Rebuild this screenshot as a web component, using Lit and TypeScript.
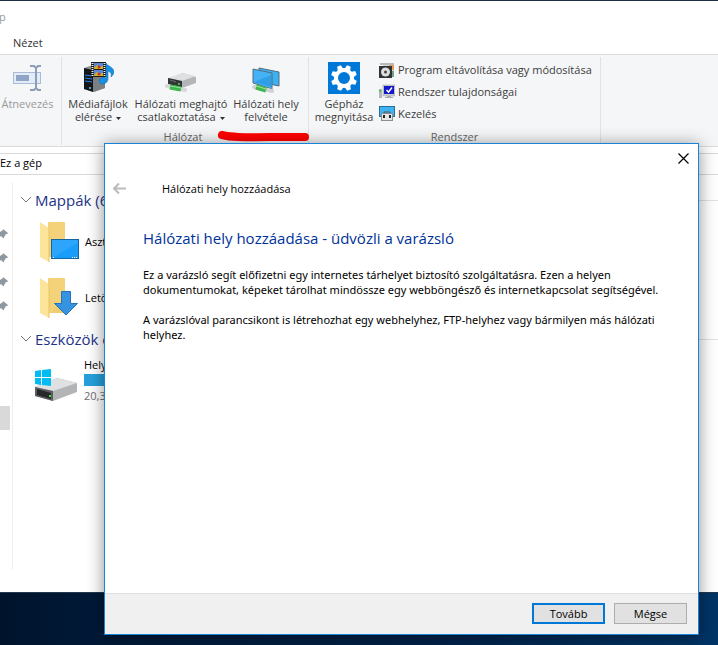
import { LitElement, html, css, svg } from "lit";
import { customElement } from "lit/decorators.js";

const renameIcon = svg`<svg class="i32" viewBox="0 0 32 32" aria-hidden="true">
  <rect x="1.500" y="10.500" width="27" height="11" fill="#e3ebf6" stroke="#a9bbd9"/>
  <rect x="4" y="13" width="13" height="6" fill="#8fa5c8"/>
  <path d="M18 4h4l2 2 2-2h3M18 28h4l2-2 2 2h3M24 6v20" fill="none" stroke="#8c9db8" stroke-width="2"/></svg>`;

const mediaIcon = svg`<svg class="i32" viewBox="0 0 32 32" aria-hidden="true">
  <path d="M2 6l9-3 12 3v20l-11 4-10-3z" fill="#8d9093"/>
  <path d="M2 6l9 2v22l-9-3z" fill="#15181b"/>
  <path d="M11 8l12-3v21l-12 4z" fill="#7d8083"/>
  <path d="M3 13l7 1M3 16l7 1M3 19l7 1" stroke="#2a84f0"/>
  <circle cx="8" cy="26" r="1" fill="#62cfff"/>
  <rect x="9" y="0" width="15" height="15" fill="#1b1b1b"/>
  <path d="M10.500 1v13M22.500 1v13" stroke="#eee" stroke-width="2" stroke-dasharray="1 1"/>
  <rect x="12" y="1" width="9" height="6" fill="#5c86d8"/><rect x="12" y="8" width="9" height="6" fill="#5c86d8"/>
  <path d="M12 6l3-3 3 2 3-1v3h-9zM12 13l3-3 3 2 3-1v3h-9z" fill="#d8b21c"/>
  <circle cx="17" cy="5" r="1.500" fill="#c8302c"/><circle cx="17" cy="12" r="1.500" fill="#c8302c"/>
  <path d="M24 1c1 3 8 4 8 9 0 2-2 4-3 5 1-4-1-5-3-6v8c0 3-3 5-6 5-3 0-4-4-1-6 2-1 3-1 5 0z" fill="#1a8fe3" stroke="#0d6ab5" stroke-width=".5"/></svg>`;

const driveIcon = svg`<svg class="i32" viewBox="0 0 32 32" aria-hidden="true">
  <path d="M3 17L18 11l13 4v6L17 26 3 22z" fill="#b3b5b8"/>
  <path d="M3 16L18 11l13 3-14 5z" fill="#dfe0e1"/>
  <path d="M3 16l14 3v7L3 22z" fill="#323537"/>
  <path d="M5 18l6 2" stroke="#6b6e70"/><circle cx="14" cy="22" r="1" fill="#49e04e"/>
  <path d="M2 24l18 4" stroke="#d6d8da" stroke-width="4" stroke-linecap="round"/>
  <path d="M5 25l11 2" stroke="#3fb54b" stroke-width="5"/><path d="M5 24l11 2" stroke="#8fe394"/></svg>`;

const placeIcon = svg`<svg class="i32" viewBox="0 0 32 32" aria-hidden="true">
  <path d="M9 6l20 4v14l-20-4z" fill="#3db0f2" stroke="#536c7d"/>
  <path d="M3 7l19 4v16l-19-6z" fill="#45b2f5" stroke="#536c7d"/>
  <path d="M4 20L21 13v12z" fill="#2f9fe8"/>
  <path d="M4 25l18 4" stroke="#d0d3d5" stroke-width="4" stroke-linecap="round"/>
  <path d="M6 25l10 3" stroke="#42b64c" stroke-width="5"/><path d="M6 24l10 3" stroke="#9be69d"/></svg>`;

const teeth = [0, 45, 90, 135, 180, 225, 270, 315];
const gearIcon = svg`<svg class="i32" viewBox="0 0 32 32" aria-hidden="true">
  <rect width="32" height="32" fill="#0078d7"/>
  <circle cx="16" cy="16" r="8" fill="none" stroke="#fff" stroke-width="4"/>
  ${teeth.map(a => svg`<path d="M13 7.500l1-4.500h4l1 4.500z" fill="#fff" transform="rotate(${a + 22} 16 16)"/>`)}</svg>`;

const programIcon = svg`<svg class="i16" viewBox="0 0 16 16" aria-hidden="true">
  <path d="M3 1h12v14h-4z" fill="#cfd6d2"/><path d="M1 1h14v2h-14z" fill="#b8bbbd"/>
  <path d="M10 3h5v6z" fill="#e79a5a"/><path d="M12 9h3v6h-3z" fill="#6fa486"/>
  <rect x="0" y="4" width="13" height="12" fill="#303234"/>
  <circle cx="6.500" cy="10" r="4.500" fill="#dcdedf"/><circle cx="6.500" cy="10" r="1.500" fill="#444"/></svg>`;

const systemIcon = svg`<svg class="i16" viewBox="0 0 16 16" aria-hidden="true">
  <rect x="0" y="5" width="3" height="9" fill="#b4b7ba"/><rect x="0" y="6" width="2" height="2" fill="#4fc444"/>
  <rect x="4" y="1" width="12" height="11" fill="#c9cccf" stroke="#9b9ea1" stroke-width=".5"/>
  <rect x="5" y="2" width="10" height="8" fill="#1418c8"/>
  <path d="M7.500 6l2 2 3.500-4.500" stroke="#fff" stroke-width="1.500" fill="none"/>
  <path d="M8 12h4v1h2v1H6v-1h2z" fill="#a9acaf"/></svg>`;

const manageIcon = svg`<svg class="i16" viewBox="0 0 16 16" aria-hidden="true">
  <rect x=".5" y=".5" width="15" height="10" fill="#3fb2f2" stroke="#2a6d9a"/>
  <path d="M5 8V6h6v2" stroke="#555" fill="none"/>
  <rect x="2.500" y="7.500" width="11" height="7" fill="#e3e5e7" stroke="#8b8e91"/>
  <path d="M5 9v3M11 9v3" stroke="#222" stroke-width="2"/></svg>`;

const pinIcon = svg`<svg class="pin" viewBox="0 0 8 10" aria-hidden="true">
  <path d="M3 0l5 4-1 1-1 0-2 3 0 1-1 0-2-2-3 2 2-3-2-2 1-1 1 0 3-2z" fill="#8d979f"/></svg>`;

const folder = svg`
  <path d="M8 3h17v35H8z" fill="#f0cd70"/><path d="M8 3h17v20L10 38z" fill="#f5d67f" opacity=".6"/>
  <path d="M0 3l9 6v34l-9-5z" fill="#fde49b"/><path d="M9 9v34" stroke="#e6c468"/>`;
const desktopFolder = svg`<svg class="folder" viewBox="0 0 40 44" aria-hidden="true">${folder}
  <rect x="11.500" y="20.500" width="27" height="19" fill="#189dfb" stroke="#1565a0"/>
  <path d="M12 39L38 24V21H12z" fill="#3fb0ff" opacity=".5"/>
  <path d="M13 38.500h1M32 38.500h6" stroke="#fff" stroke-dasharray="1 1"/></svg>`;
const downloadFolder = svg`<svg class="folder" viewBox="0 0 40 44" aria-hidden="true">${folder}
  <path d="M21.500 16.500h9v12h7L26 40 14.500 28.500h7z" fill="#3593e2" stroke="#2374bd"/></svg>`;
const diskIcon = svg`<svg class="disk" viewBox="0 0 44 34" aria-hidden="true">
  <path d="M0 18L22 9l20 5v9L18 32 0 27z" fill="#b3b4b6"/>
  <path d="M0 18L22 9l20 5-24 8z" fill="#dfe0e2"/>
  <path d="M0 18l18 4v10L0 27z" fill="#5b5d60"/><path d="M2 20l14 4v6L2 26z" fill="#26282a"/>
  <rect x="14" y="26" width="2" height="2" fill="#45e04a"/>
  <path d="M0 2l6-1v7H0zM7 1l9-1v8H7zM0 9h6v7l-6-1zM7 9h9v8l-9-1z" fill="#00bcf2"/></svg>`;
const chevron = svg`<svg class="chevron" viewBox="0 0 12 8" aria-hidden="true"><path d="M1 1l5 5 5-5" fill="none" stroke="#777"/></svg>`;
const caret = svg`<svg class="caret" viewBox="0 0 5 3" aria-hidden="true"><path d="M0 0h5L2.500 3z" fill="#333"/></svg>`;

@customElement("setup-dialog")
export class SetupDialog extends LitElement {
  static styles = css`
    :host { display: flex; flex-direction: column; box-sizing: border-box; background: #fff; border: 1px solid #1883d7; box-shadow: 0 2px 16px rgba(0, 0, 0, .45); font-size: 11px; color: #000; }
    button { font: inherit; color: inherit; padding: 0; }
    .close, .back { border: 0; background: none; display: flex; align-items: center; justify-content: center; }
    .close { align-self: flex-end; width: 30px; height: 28px; }
    .close svg { width: 11px; height: 11px; }
    .caption { display: flex; align-items: center; height: 32px; }
    .back { width: 28px; height: 28px; }
    .back svg { width: 13px; height: 11px; }
    .title { margin-left: 29px; }
    .body { flex: 1; padding: 22px 20px 0 38px; }
    h1 { margin: 0 0 17px; font-size: 15px; line-height: 24px; font-weight: 400; color: #039; }
    p { margin: 0 0 15px; line-height: 15px; font-family: "Noto Sans", "Open Sans", sans-serif; }
    .footer { display: flex; justify-content: flex-end; gap: 9px; padding: 9px 11px 10px; background: #f0f0f0; border-top: 1px solid #dfdfdf; }
    .btn { width: 73px; height: 21px; border: 1px solid #adadad; background: #e1e1e1; line-height: 15px; }
    .primary { border: 2px solid #0078d7; }
  `;
  render() {
    return html`
      <button class="close" aria-label="Bezárás"><svg viewBox="0 0 11 11"><path d="M.5.5l10 10M10.500.5l-10 10" stroke="#000" stroke-width="1.200"/></svg></button>
      <div class="caption">
        <button class="back" aria-label="Vissza"><svg viewBox="0 0 13 11"><path d="M6 .5l-5 5 5 5M1 5.500h12" fill="none" stroke="#bbb" stroke-width="2"/></svg></button>
        <span class="title">Hálózati hely hozzáadása</span>
      </div>
      <div class="body">
        <h1>Hálózati hely hozzáadása - üdvözli a varázsló</h1>
        <p>Ez a varázsló segít előfizetni egy internetes tárhelyet biztosító szolgáltatásra. Ezen a helyen dokumentumokat, képeket tárolhat mindössze egy webböngésző és internetkapcsolat segítségével.</p>
        <p>A varázslóval parancsikont is létrehozhat egy webhelyhez, FTP-helyhez vagy bármilyen más hálózati helyhez.</p>
      </div>
      <div class="footer"><button class="btn primary">Tovább</button><button class="btn">Mégse</button></div>`;
  }
}

@customElement("app-root")
export class AppRoot extends LitElement {
  static styles = css`
    :host { display: block; position: relative; min-height: 100vh; overflow: hidden; box-sizing: border-box; padding-bottom: 52px; background: linear-gradient(90deg, #00132c, #001a38 15%, #00224a 60%, #003567); font: 11px/15px "Open Sans", "Noto Sans", sans-serif; color: #000; }
    button { font: inherit; color: inherit; border: 0; background: none; padding: 0; }
    .window { display: flex; flex-direction: column; box-sizing: border-box; background: #fff; border-top: 1px solid #1f2f45; border-bottom: 1px solid #26384d; min-height: calc(100vh - 52px); }
    .titlebar { height: 30px; line-height: 32px; color: #999; text-indent: -1px; }
    .tabs { display: flex; height: 23px; padding-left: 13px; color: #333; }
    .tabs button { line-height: 24px; }
    .ribbon { display: flex; height: 91px; background: #f5f6f7; border-top: 1px solid #dadbdc; border-bottom: 1px solid #dadbdc; color: #3c3c3c; line-height: 13px; }
    .group { display: flex; flex-direction: column; justify-content: space-between; margin: 2px 0 1px; border-right: 1px solid #e0e2e4; }
    .rename { width: 61px; color: #999; }
    .network { width: 246px; }
    .system { width: 291px; }
    .tools { display: flex; padding-top: 5px; }
    .network .tools { padding-left: 4px; gap: 2px; }
    .system .tools { padding-left: 6px; gap: 6px; }
    .tool { display: flex; flex-direction: column; align-items: center; gap: 3px; white-space: nowrap; }
    .rename .tool { width: 55px; }
    .t1 { width: 64px; } .t2 { width: 98px; } .t3 { width: 68px; } .t4 { width: 58px; }
    .list { display: flex; flex-direction: column; gap: 6px; }
    .list button { display: flex; gap: 3px; align-items: center; height: 16px; line-height: 14px; white-space: nowrap; }
    .label { text-align: center; color: #666; line-height: 16px; }
    .network .label { padding-right: 4px; }
    .i32 { width: 32px; height: 32px; } .i16 { width: 16px; height: 16px; }
    .caret { width: 5px; height: 3px; margin-left: 4px; vertical-align: middle; }
    .address { display: flex; align-items: center; height: 20px; margin-top: 6px; border: 1px solid #d9d9d9; border-width: 1px 0; line-height: 16px; }
    .address span { padding-bottom: 2px; }
    .panes { flex: 1; display: flex; padding: 7px 0 22px; }
    .nav { width: 12px; border-right: 1px solid #eee; display: flex; flex-direction: column; padding-top: 47px; }
    .pins { display: flex; flex-direction: column; gap: 14px; }
    .pin { width: 8px; height: 10px; }
    .selected { width: 10px; height: 24px; margin-top: 95px; background: #d9d9d9; }
    .files { flex: 1; padding: 4px 0 0 7px; }
    h2 { display: flex; align-items: center; gap: 3px; margin: 2px 0 1px; height: 24px; font-size: 15px; font-weight: 400; color: #1e3287; white-space: nowrap; }
    h2::after { content: ""; flex: 1; height: 1px; background: #e2e2e2; }
    .chevron { width: 12px; height: 8px; }
    .item { display: flex; align-items: center; gap: 5px; height: 56px; padding-left: 20px; }
    .folder { width: 40px; height: 44px; }
    .drive { padding-left: 15px; height: 51px; align-items: flex-end; }
    .disk { width: 44px; height: 34px; }
    .meter { width: 200px; height: 12px; margin: 2px 0; background: linear-gradient(90deg, #26a0da 80%, #e6e6e6 80%); }
    .free { color: #6d6d6d; }
    .mark { position: absolute; left: 217px; top: 129px; width: 94px; height: 14px; }
    .dialog { position: absolute; top: 143px; right: 19px; bottom: 10px; left: 104px; }
  `;
  render() {
    return html`
      <div class="window">
        <div class="titlebar">p</div>
        <div class="tabs"><button>Nézet</button></div>
        <div class="ribbon">
          <div class="group rename"><div class="tools"><button class="tool">${renameIcon}<span>Átnevezés</span></button></div></div>
          <div class="group network">
            <div class="tools">
              <button class="tool t1">${mediaIcon}<span>Médiafájlok<br>elérése${caret}</span></button>
              <button class="tool t2">${driveIcon}<span>Hálózati meghajtó<br>csatlakoztatása${caret}</span></button>
              <button class="tool t3">${placeIcon}<span>Hálózati hely<br>felvétele</span></button>
            </div>
            <div class="label">Hálózat</div>
          </div>
          <div class="group system">
            <div class="tools">
              <button class="tool t4">${gearIcon}<span>Gépház<br>megnyitása</span></button>
              <div class="list">
                <button>${programIcon}Program eltávolítása vagy módosítása</button>
                <button>${systemIcon}Rendszer tulajdonságai</button>
                <button>${manageIcon}Kezelés</button>
              </div>
            </div>
            <div class="label">Rendszer</div>
          </div>
        </div>
        <div class="address"><span>Ez a gép</span></div>
        <div class="panes">
          <div class="nav"><div class="pins">${[0, 1, 2, 3].map(() => pinIcon)}</div><div class="selected"></div></div>
          <div class="files">
            <h2>${chevron}Mappák (6)</h2>
            <div class="item">${desktopFolder}<span>Asztal</span></div>
            <div class="item">${downloadFolder}<span>Letöltések</span></div>
            <h2>${chevron}Eszközök és</h2>
            <div class="item drive">${diskIcon}<div><div>Helyi lemez</div><div class="meter"></div><div class="free">20,3 GB</div></div></div>
          </div>
        </div>
      </div>
      <svg class="mark" viewBox="0 0 94 14" aria-hidden="true"><path d="M5 6c12 3 24 2 83 2" fill="none" stroke="#f00" stroke-width="8" stroke-linecap="round"/></svg>
      <setup-dialog class="dialog" role="dialog" aria-label="Hálózati hely hozzáadása"></setup-dialog>`;
  }
}
